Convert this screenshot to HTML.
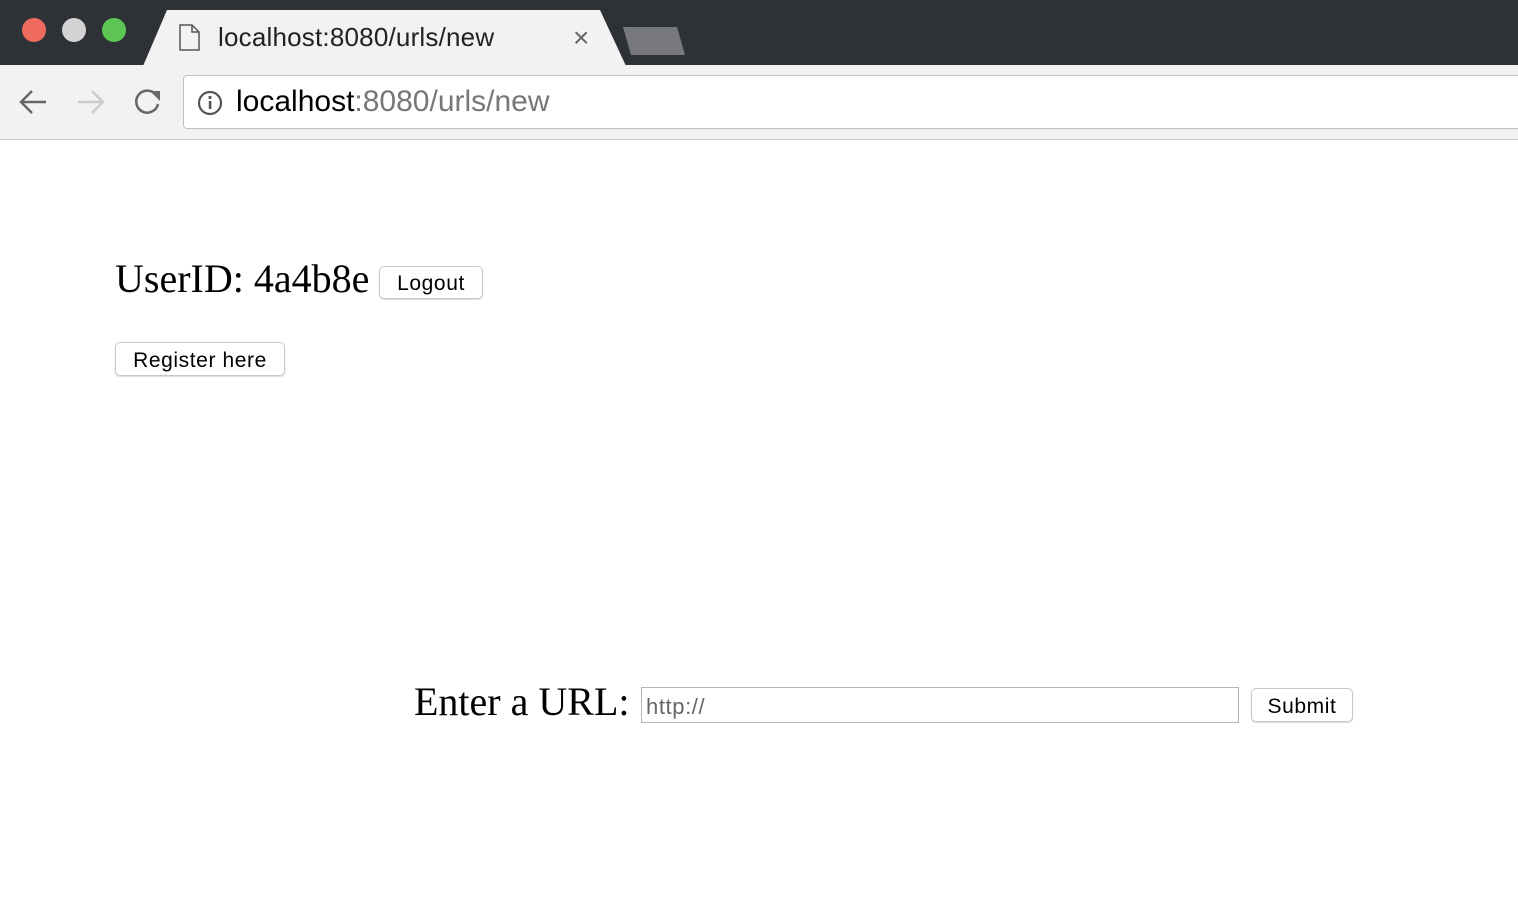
<!DOCTYPE html>
<html><head><style>
*{box-sizing:border-box}
body{margin:0;width:1518px;height:910px;background:#fff;position:relative;overflow:hidden;font-family:"Liberation Sans",sans-serif}
.abs{position:absolute}
.dot{position:absolute;top:18px;width:24px;height:24px;border-radius:50%}
.btn{position:absolute;background:#fff;border:1px solid #c8c8c8;border-radius:5px;box-shadow:0 1px 1px rgba(0,0,0,.15);font-size:21px;color:#000;text-align:center;letter-spacing:0.6px}
.serif{font-family:"Liberation Serif",serif;color:#000;position:absolute;white-space:nowrap}
</style></head><body>
<div class="abs" style="left:0;top:0;width:1518px;height:65px;background:#2e3136"></div>
<div class="dot" style="left:22px;background:#ee6a5e"></div>
<div class="dot" style="left:62px;background:#d4d4d4"></div>
<div class="dot" style="left:102px;background:#5dc553"></div>
<svg class="abs" style="left:140px;top:9px" width="560" height="57"><path d="M3 57 L27 1 H460 L486 57 Z" fill="#f2f2f2"/><path d="M483 18 H537 L545 46 H491 Z" fill="#76787b"/></svg>
<svg class="abs" style="left:178px;top:24px" width="24" height="28"><path d="M2 1 H14 L21 8 V26 H2 Z M14 1 V8 H21" fill="none" stroke="#555" stroke-width="1.5"/></svg>
<div class="abs" style="left:218px;top:22px;font-size:26px;color:#222;letter-spacing:0.2px">localhost:8080/urls/new</div>
<div class="abs" style="left:573px;top:22px;font-size:28px;color:#666">×</div>
<div class="abs" style="left:0;top:65px;width:1518px;height:75px;background:#f2f2f2;border-bottom:1px solid #d0d0d0"></div>
<svg class="abs" style="left:18px;top:88px" width="150" height="30"><g fill="none" stroke-width="2.5"><path d="M28 14 H4 M14 3 L3 14 L14 25" stroke="#666"/><path d="M60 14 H84 M74 3 L85 14 L74 25" stroke="#ccc"/><path d="M138 7 A11 11 0 1 0 140 16" stroke="#666"/></g><path d="M132 3 L142 3 L142 13 Z" fill="#666"/></svg>
<div class="abs" style="left:183px;top:75px;width:1340px;height:54px;background:#fff;border:1px solid #c0c0c0;border-radius:4px"></div>
<svg class="abs" style="left:197px;top:90px" width="26" height="26"><circle cx="13" cy="13" r="11" fill="none" stroke="#555" stroke-width="2.2"/><rect x="11.8" y="11" width="2.6" height="8" fill="#555"/><circle cx="13" cy="7.5" r="1.6" fill="#555"/></svg>
<div class="abs" style="left:236px;top:85px;font-size:30px;color:#000">localhost<span style="color:#777">:8080/urls/new</span></div>
<div class="serif" style="left:115px;top:255px;font-size:40px">UserID: 4a4b8e</div>
<div class="btn" style="left:379px;top:266px;width:104px;height:33px;line-height:34px">Logout</div>
<div class="btn" style="left:115px;top:342px;width:170px;height:34px;line-height:35px">Register here</div>
<div class="serif" style="left:414px;top:678px;font-size:40px">Enter a URL:</div>
<div class="abs" style="left:641px;top:687px;width:598px;height:36px;border:1px solid #b5b5b5;font-size:22px;color:#666;padding:6px 0 0 4px;letter-spacing:0.6px">http://</div>
<div class="btn" style="left:1251px;top:688px;width:102px;height:34px;line-height:35px">Submit</div>
</body></html>
